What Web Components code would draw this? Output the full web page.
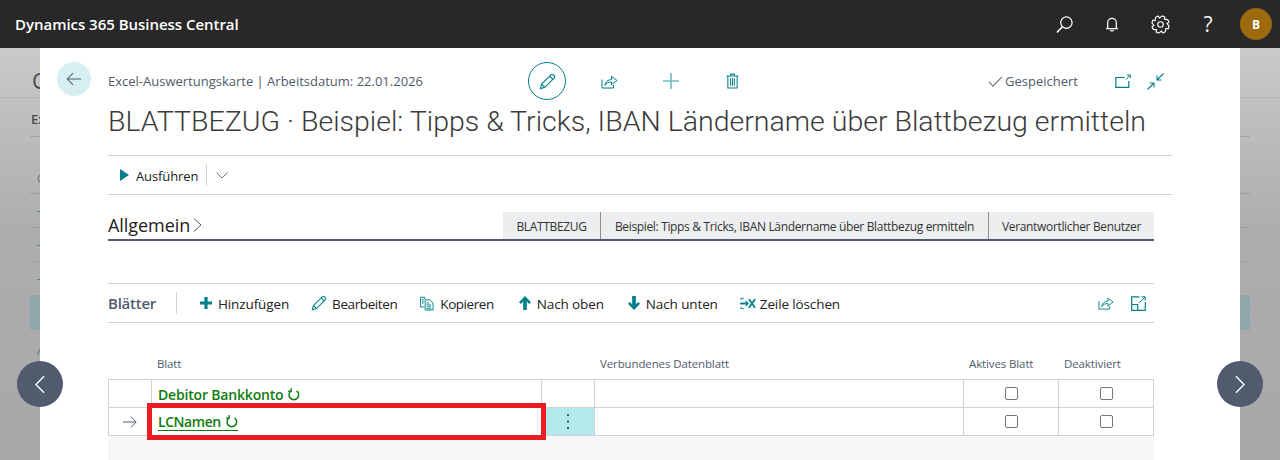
<!DOCTYPE html>
<html lang="de">
<head>
<meta charset="utf-8">
<title>Excel-Auswertungskarte</title>
<style>
    html, body { margin:0; height:100%; overflow:hidden; }
    body {
        font-family:"Open Sans","Noto Sans",sans-serif;
        color:#212121;
        --teal:#00808a;
        --slate:#505c6d;
        --rule:#d2d2d6;
    }
</style>
</head>
<body>
<bc-topbar>Dynamics 365 Business Central</bc-topbar>
<bc-backdrop></bc-backdrop>
<bc-card>
    <bc-page-head slot="head"></bc-page-head>
    <bc-actionbar></bc-actionbar>
    <bc-section-head></bc-section-head>
    <bc-lines-toolbar>
        <bc-action icon="plus-bold" w="12" h="12" gap="6">Hinzufügen</bc-action>
        <bc-action icon="pencil" w="16" h="16" gap="5" before="22" ls="-0.4">Bearbeiten</bc-action>
        <bc-action icon="copy" w="14" h="15" gap="6" before="23" ls="-0.45">Kopieren</bc-action>
        <bc-action icon="up" w="12" h="14" gap="6" before="25">Nach oben</bc-action>
        <bc-action icon="down" w="12" h="14" gap="6" before="24">Nach unten</bc-action>
        <bc-action icon="delrow" w="16" h="13" gap="4" before="22">Zeile löschen</bc-action>
    </bc-lines-toolbar>
    <bc-lines-grid></bc-lines-grid>
</bc-card>
<bc-nav dir="prev"></bc-nav>
<bc-nav dir="next"></bc-nav>

<script>
// ===== ICONS =====
// gear outline: 8 teeth, four corner points per tooth
let gearPath = '';
for (let i = 0; i < 8; i++) {
    [[-13, 8.9], [-8, 9.2], [8, 9.2], [13, 6.9]].forEach(([off, r], j) => {
        const a = (i * 45 + off + 22.5) * Math.PI / 180;
        const x = (10 + r * Math.cos(a)).toFixed(2), y = (10 + r * Math.sin(a)).toFixed(2);
        gearPath += (i === 0 && j === 0 ? 'M' : 'L') + x + ' ' + y + ' ';
    });
}
gearPath += 'Z';

const ICONS = {
    search: '<svg viewBox="0 0 20 20" fill="none" stroke="currentColor" stroke-width="1.3"><circle cx="12" cy="8" r="6"/><path d="M7.8 12.3 2 18.5" stroke-width="1.6"/></svg>',
    bell: '<svg viewBox="0 0 20 20" fill="none" stroke="currentColor" stroke-width="1.4"><path d="M5.2 15V8.5a4.8 4.8 0 0 1 9.6 0V15M3.5 15.2h13"/><path d="M8.3 16.5a1.8 1.8 0 0 0 3.4 0"/></svg>',
    gear: '<svg viewBox="0 0 20 20" fill="none" stroke="currentColor" stroke-width="1.2" stroke-linejoin="round"><circle cx="10" cy="10" r="2.9"/><path d="' + gearPath + '"/></svg>',
    back: '<svg viewBox="0 0 18 16" fill="none" stroke="currentColor" stroke-width="1.2"><path d="M17 8H1.500M8 1.300 1.300 8 8 14.700"/></svg>',
    pencil: '<svg viewBox="0 0 18 18" fill="none" stroke="currentColor" stroke-width="1.200"><path d="M1.500 16.500 2.800 11.800 12.800 1.800a1.600 1.600 0 0 1 2.300 0l1.100 1.100a1.600 1.600 0 0 1 0 2.300L6.200 15.200z"/><path d="M2.800 11.800l3.400 3.400M11.300 3.300l3.400 3.400"/></svg>',
    share: '<svg viewBox="0 0 17 15" fill="none" stroke="currentColor" stroke-width="1"><path d="M1 5.500V14h11.500v-3"/><path d="M3.800 11.500C4.300 8 6.800 5.700 10.500 5.500V2.300L16 6.500 10.500 10.700V8C7.800 8 5.500 9 3.800 11.500z"/></svg>',
    plus: '<svg viewBox="0 0 16 16" fill="none" stroke="#6db9bf" stroke-width="1.600"><path d="M8 0v16M0 8h16"/></svg>',
    trash: '<svg viewBox="0 0 14 16" fill="none" stroke="currentColor" stroke-width="1.100"><path d="M.5 2.500h13M5 2.500V.6h4v1.900M2 2.500V15.500h10V2.500M5 5v8M7 5v8M9 5v8"/></svg>',
    check: '<svg viewBox="0 0 16 12" fill="none" stroke="#6b7482" stroke-width="1.200"><path d="M1 6.500 5.200 11 15 1"/></svg>',
    popout: '<svg viewBox="0 0 16 14" fill="none" stroke="currentColor" stroke-width="1.200"><path d="M10 3.500H.8v9.800h13V7"/><path d="M11 5.500 15 1.200M12 1h3.300v3.300" stroke-width="1"/></svg>',
    collapse: '<svg viewBox="0 0 17 17" fill="none" stroke="currentColor" stroke-width="1.100"><path d="M16.500.5 10 7M10 2.500V7h4.500M.5 16.500 7 10M2.500 10H7v4.500"/></svg>',
    play: '<svg viewBox="0 0 9 12"><path d="M0 0 9 6 0 12z" fill="currentColor"/></svg>',
    chevron: '<svg viewBox="0 0 12 7" fill="none" stroke="#6b7482" stroke-width="1"><path d="M.5.500 6 6 11.500.5"/></svg>',
    'plus-bold': '<svg viewBox="0 0 12 12"><path d="M4.400 0h3.200v4.400H12v3.200H7.600V12H4.400V7.600H0V4.400h4.400z" fill="currentColor"/></svg>',
    copy: '<svg viewBox="0 0 15 15" fill="none" stroke="currentColor" stroke-width="1"><path d="M5 3V.8H.6v10.400H5"/><path d="M5.500 3.500h5l3.500 3.500v7.500H5.500zM7 7h3M7 9h5M7 11h5M7 13h5M2 3h2M2 5h2M2 7h2"/></svg>',
    up: '<svg viewBox="0 0 13 15"><path d="M6.500 0 13 6.800 11 8.600 8.500 6V15h-4V6L2 8.600 0 6.800z" fill="currentColor"/></svg>',
    down: '<svg viewBox="0 0 13 15"><path d="M6.500 15 13 8.200 11 6.400 8.500 9V0h-4v9L2 6.400 0 8.200z" fill="currentColor"/></svg>',
    delrow: '<svg viewBox="0 0 17 13" fill="none" stroke="currentColor"><path d="M4 1H1v2M1 10v2h3" stroke-width="1"/><path d="M0 6.500h8.500" stroke-width="2"/><path d="M6 4l2.500 2.500L6 9" stroke-width="1.500"/><path d="M9.500 2l6.500 9M16 2l-6.500 9" stroke-width="1.900"/></svg>',
    expand: '<svg viewBox="0 0 15 15" fill="none" stroke="currentColor" stroke-width="1.200"><path d="M8.500.8H.7v13.500h13.600V6"/><path d="M.7 8.500h6v5.800"/><path d="M8.500 6.500 14 1M10.500.8h3.700v3.700" stroke-width="1"/></svg>',
    arrow: '<svg viewBox="0 0 14 12" fill="none" stroke="currentColor" stroke-width="1"><path d="M0 6h13M8 .8 13.200 6 8 11.200"/></svg>',
    refresh: '<svg viewBox="0 0 12 13" fill="none" stroke="currentColor" stroke-width="1.500"><path d="M8.600 2.900a4.800 4.800 0 1 1-5.500 0"/><path d="M3.200 0v3.200H0" stroke-width="1.300"/></svg>',
    dots: '<svg viewBox="0 0 2 15"><path d="M0 0h2v2H0zM0 6.500h2v2H0zM0 13h2v2H0z" fill="currentColor"/></svg>',
    prev: '<svg viewBox="0 0 11 20" fill="none" stroke="currentColor" stroke-width="1.500"><path d="M10 1 1 10l9 9"/></svg>',
    next: '<svg viewBox="0 0 11 20" fill="none" stroke="currentColor" stroke-width="1.500"><path d="M1 1l9 9-9 9"/></svg>'
};

customElements.define('bc-icon', class extends HTMLElement {
    connectedCallback() {
        const w = this.getAttribute('w') || 16;
        const h = this.getAttribute('h') || w;
        this.attachShadow({ mode: 'open' });
        this.shadowRoot.innerHTML = `
            <style>
                :host { display:inline-flex; flex:none; width:${w}px; height:${h}px; }
                svg { width:100%; height:100%; display:block; }
            </style>
            ${ICONS[this.getAttribute('name')] || ''}`;
    }
});

// ===== TOP BAR =====
customElements.define('bc-topbar', class extends HTMLElement {
    connectedCallback() {
        this.attachShadow({ mode: 'open' });
        this.shadowRoot.innerHTML = `
            <style>
                :host { display:flex; align-items:center; height:48px; background:#282828; color:#fff; padding:0 8px 0 15px; }
                .brand { font-size:15px; font-weight:600; letter-spacing:-0.03px; flex:1; }
                .tool { width:48px; display:flex; justify-content:center; align-items:center; }
                .q { font-size:21px; font-weight:400; line-height:24px; color:#f2f2f2; }
                .avatar { width:32px; height:32px; border-radius:50%; background:#9a6a0c; margin-left:8px; display:flex; align-items:center; justify-content:center; font-size:12px; font-weight:700; }
            </style>
            <div class="brand"><slot></slot></div>
            <div class="tool"><bc-icon name="search" w="19"></bc-icon></div>
            <div class="tool"><bc-icon name="bell" w="18"></bc-icon></div>
            <div class="tool"><bc-icon name="gear" w="19"></bc-icon></div>
            <div class="tool q">?</div>
            <div class="avatar">B</div>`;
    }
});

// ===== PAGE BEHIND THE DIALOG =====
customElements.define('bc-backdrop', class extends HTMLElement {
    connectedCallback() {
        this.attachShadow({ mode: 'open' });
        this.shadowRoot.innerHTML = `
            <style>
                :host { display:block; height:412px; box-sizing:border-box; padding:0 30px; background:linear-gradient(#c9c9c9,#adadad 45%,#a8a8a8); color:#4a4a4a; overflow:hidden; }
                .title { height:50px; margin:0 -30px; padding:0 0 0 32px; line-height:64px; font-size:22px; border-bottom:1px solid #b5b5b5; box-sizing:border-box; }
                .group { height:39px; line-height:42px; font-size:13px; font-weight:600; padding-left:1px; border-bottom:1px solid #a2a2a2; box-sizing:border-box; }
                .row { height:34px; border-bottom:1px solid #9e9e9e; box-sizing:border-box; padding-left:7px; font-size:13px; line-height:34px; color:#777; }
                .first { height:57px; line-height:82px; }
                .dash::after { content:""; display:inline-block; width:4px; height:1px; background:#4a8a90; vertical-align:4px; }
                .sel { height:34px; background:#8fa8aa; border:0; }
                .last { padding-left:7px; font-size:13px; line-height:40px; color:#5a8a8e; }
            </style>
            <div class="title">C</div>
            <div class="group">Ex</div>
            <div class="row first">C</div>
            <div class="row dash"></div>
            <div class="row dash"></div>
            <div class="row dash"></div>
            <div class="row sel"></div>
            <div class="last">A</div>`;
    }
});

// ===== DIALOG CARD =====
customElements.define('bc-card', class extends HTMLElement {
    connectedCallback() {
        this.attachShadow({ mode: 'open' });
        this.shadowRoot.innerHTML = `
            <style>
                :host { position:absolute; left:40px; top:48px; width:1200px; height:412px; background:#fff; display:flex; box-sizing:border-box; overflow:hidden; }
                .rail { width:68px; flex:none; padding:14px 0 0 17px; box-sizing:border-box; }
                .back { width:34px; height:34px; border-radius:50%; background:#d6eff2; color:#505c6d; display:flex; align-items:center; justify-content:center; }
                .main { width:1064px; display:flex; flex-direction:column; }
            </style>
            <div class="rail"><div class="back"><bc-icon name="back" w="16" h="14"></bc-icon></div></div>
            <div class="main"><slot name="head"></slot><slot></slot></div>`;
    }
});

customElements.define('bc-page-head', class extends HTMLElement {
    connectedCallback() {
        this.attachShadow({ mode: 'open' });
        this.shadowRoot.innerHTML = `
            <style>
                :host { display:block; padding-top:14px; }
                .top { display:grid; grid-template-columns:420px 1fr auto; align-items:center; height:38px; color:var(--teal); }
                .crumb { font-size:13px; color:var(--slate); white-space:nowrap; }
                .cmds { display:flex; align-items:center; }
                .edit { width:36px; height:36px; border:1.3px solid var(--teal); border-radius:50%; display:flex; align-items:center; justify-content:center; }
                .saved { display:flex; align-items:center; gap:2px; font-size:13px; color:var(--slate); margin-right:37px; }
                .right { display:flex; align-items:center; padding-right:8px; }
                h1 { margin:0; height:55px; font-family:Roboto,"Open Sans",sans-serif; font-size:28.500px; line-height:44px; font-weight:300; color:#3a3a3a; white-space:nowrap; }
            </style>
            <div class="top">
                <div class="crumb">Excel-Auswertungskarte | Arbeitsdatum: 22.01.2026</div>
                <div class="cmds">
                    <div class="edit"><bc-icon name="pencil" w="17"></bc-icon></div>
                    <bc-icon name="share" w="17" h="15" style="margin-left:35px"></bc-icon>
                    <bc-icon name="plus" w="16" style="margin-left:45px"></bc-icon>
                    <bc-icon name="trash" w="13" h="16" style="margin-left:47px"></bc-icon>
                </div>
                <div class="right">
                    <div class="saved"><bc-icon name="check" w="15" h="11"></bc-icon>Gespeichert</div>
                    <bc-icon name="popout" w="16" h="14"></bc-icon>
                    <bc-icon name="collapse" w="17" style="margin-left:16px"></bc-icon>
                </div>
            </div>
            <h1>BLATTBEZUG · Beispiel: Tipps &amp; Tricks, IBAN Ländername über Blattbezug ermitteln</h1>`;
    }
});

customElements.define('bc-actionbar', class extends HTMLElement {
    connectedCallback() {
        this.attachShadow({ mode: 'open' });
        this.shadowRoot.innerHTML = `
            <style>
                :host { display:flex; align-items:center; height:40px; box-sizing:border-box; border-top:1px solid var(--rule); border-bottom:1px solid var(--rule); padding-left:12px; font-size:13px; letter-spacing:-0.1px; }
                bc-icon { color:var(--teal); }
                .label { margin-left:7px; padding-top:2px; }
                .sep { width:1px; height:22px; background:var(--rule); margin:0 9px 0 8px; }
            </style>
            <bc-icon name="play" w="9" h="12"></bc-icon>
            <span class="label">Ausführen</span>
            <span class="sep"></span>
            <bc-icon name="chevron" w="12" h="7"></bc-icon>`;
    }
});

customElements.define('bc-section-head', class extends HTMLElement {
    connectedCallback() {
        this.attachShadow({ mode: 'open' });
        this.shadowRoot.innerHTML = `
            <style>
                :host { display:flex; align-items:flex-end; justify-content:space-between; width:1046px; margin-top:16px; height:30px; box-sizing:border-box; border-bottom:2px solid var(--slate); }
                .name { font-size:18px; font-weight:500; letter-spacing:-0.05px; line-height:28px; display:flex; align-items:center; gap:3px; }
                .name svg { width:9px; height:16px; }
                .tabs { display:flex; height:27px; background:#edeef0; font-size:12px; letter-spacing:-0.34px; color:#333; }
                .tabs div { display:flex; align-items:center; justify-content:center; box-sizing:border-box; border-right:1px solid #8f8f8f; padding-top:1px; }
                .tabs div:last-child { border-right:0; }
            </style>
            <div class="name">Allgemein<svg viewBox="0 0 9 16" fill="none" stroke="#505c6d" stroke-width="1"><path d="M1 1.500 8 8l-7 6.500"/></svg></div>
            <div class="tabs">
                <div style="width:98px">BLATTBEZUG</div>
                <div style="width:388px">Beispiel: Tipps &amp; Tricks, IBAN Ländername über Blattbezug ermitteln</div>
                <div style="width:165px">Verantwortlicher Benutzer</div>
            </div>`;
    }
});

// ===== LINES =====
customElements.define('bc-action', class extends HTMLElement {
    connectedCallback() {
        const w = this.getAttribute('w') || 16;
        const h = this.getAttribute('h') || 14;
        const gap = this.getAttribute('gap') || 5;
        const before = this.getAttribute('before') || 0;
        const ls = this.getAttribute('ls') || -0.12;
        this.attachShadow({ mode: 'open' });
        this.shadowRoot.innerHTML = `
            <style>
                :host { display:inline-flex; align-items:center; gap:${gap}px; margin-left:${before}px; font-size:13.5px; letter-spacing:${ls}px; white-space:nowrap; }
                bc-icon { color:var(--teal); }
                span { padding-top:2px; }
            </style>
            <bc-icon name="${this.getAttribute('icon')}" w="${w}" h="${h}"></bc-icon><span><slot></slot></span>`;
    }
});

customElements.define('bc-lines-toolbar', class extends HTMLElement {
    connectedCallback() {
        this.attachShadow({ mode: 'open' });
        this.shadowRoot.innerHTML = `
            <style>
                :host { display:flex; align-items:center; width:1046px; margin-top:42px; height:40px; box-sizing:border-box; border-top:1px solid var(--rule); border-bottom:1px solid var(--rule); }
                .name { font-size:15px; font-weight:600; letter-spacing:-0.25px; color:var(--slate); width:68px; }
                .sep { width:1px; height:22px; background:var(--rule); margin-right:23px; }
                .items { display:flex; flex:1; }
                .tail { display:flex; align-items:center; gap:17px; color:var(--teal); padding-right:8px; }
            </style>
            <div class="name">Blätter</div>
            <span class="sep"></span>
            <div class="items"><slot></slot></div>
            <div class="tail"><bc-icon name="share" w="16" h="14"></bc-icon><bc-icon name="expand" w="15"></bc-icon></div>`;
    }
});

customElements.define('bc-lines-grid', class extends HTMLElement {
    connectedCallback() {
        this.attachShadow({ mode: 'open' });
        this.shadowRoot.innerHTML = `
            <style>
                :host { display:block; width:1046px; margin-top:32px; flex:1; --cols:44px 390px 53px 369px 95px 95px; }
                .heads { display:grid; grid-template-columns:var(--cols); height:25px; font-size:11.500px; letter-spacing:-0.12px; color:var(--slate); line-height:18px; }
                .heads div { padding-left:5px; }
                .body { background:#f5f6f8; height:100%; }
                .rows { display:grid; grid-template-columns:var(--cols); grid-auto-rows:28px; background:#fff; border-top:1px solid var(--rule); margin-top:-1px; }
                .cell { box-sizing:border-box; border-right:1px solid var(--rule); border-bottom:1px solid var(--rule); display:flex; align-items:center; position:relative; }
                .cell:nth-child(6n+1) { border-left:1px solid var(--rule); justify-content:center; color:var(--slate); }
                .name { padding:1px 0 0 6px; font-size:14px; font-weight:600; letter-spacing:-0.18px; color:#107c10; }
                .link { display:inline-flex; align-items:center; gap:5px; }
                .cur { letter-spacing:-0.45px; }
                .cur .link { border-bottom:1px solid #107c10; line-height:16px; }
                .mid { justify-content:center; }
                .menu { background:#b3e8ec; color:#35606e; justify-content:center; }
                .box { width:13px; height:13px; border:1.300px solid #757575; border-radius:2px; box-sizing:border-box; }
                .mark { position:absolute; left:-5px; right:-5px; top:-5px; bottom:-5px; border:5px solid #ed1c24; pointer-events:none; z-index:2; }
            </style>
            <div class="heads">
                <div></div><div>Blatt</div><div></div><div>Verbundenes Datenblatt</div><div>Aktives Blatt</div><div>Deaktiviert</div>
            </div>
            <div class="body">
                <div class="rows">
                    <div class="cell"></div>
                    <div class="cell name"><span class="link">Debitor Bankkonto <bc-icon name="refresh" w="12" h="13"></bc-icon></span></div>
                    <div class="cell"></div>
                    <div class="cell"></div>
                    <div class="cell mid"><span class="box"></span></div>
                    <div class="cell mid"><span class="box"></span></div>
                    <div class="cell"><bc-icon name="arrow" w="14" h="12"></bc-icon></div>
                    <div class="cell name cur"><span class="link">LCNamen <bc-icon name="refresh" w="12" h="13"></bc-icon></span><span class="mark"></span></div>
                    <div class="cell menu"><bc-icon name="dots" w="2" h="15"></bc-icon></div>
                    <div class="cell"></div>
                    <div class="cell mid"><span class="box"></span></div>
                    <div class="cell mid"><span class="box"></span></div>
                </div>
            </div>`;
    }
});

// ===== PREV / NEXT =====
customElements.define('bc-nav', class extends HTMLElement {
    connectedCallback() {
        const dir = this.getAttribute('dir');
        this.removeAttribute('dir');
        this.attachShadow({ mode: 'open' });
        this.shadowRoot.innerHTML = `
            <style>
                :host { position:absolute; ${dir === 'prev' ? 'left:17px' : 'left:1217px'}; top:361px; width:46px; height:46px; border-radius:50%; background:#505c6d; color:#fff; display:flex; align-items:center; justify-content:center; }
            </style>
            <bc-icon name="${dir}" w="10" h="19"></bc-icon>`;
    }
});
</script>
</body>
</html>
